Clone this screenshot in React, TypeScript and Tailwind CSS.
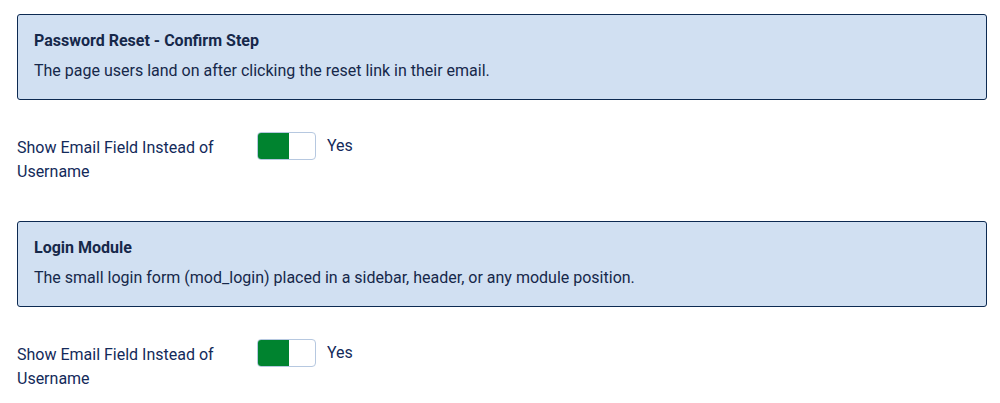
import React from 'react';

function InfoBox({ title, text }: { title: string; text: string }) {
  return (
    <div className="rounded-[3px] border border-[#0d2a52] bg-[#d1e0f2] pl-4 pr-4 pt-[14px] pb-[16px] text-[#16284a]">
      <h4 className="text-[16px] font-bold leading-6">{title}</h4>
      <p className="mt-[6px] text-[16px] leading-6">{text}</p>
    </div>
  );
}

function ToggleRow({ label }: { label: string }) {
  return (
    <div className="flex items-start">
      <div className="mt-[4px] w-[240px] text-[16px] leading-6 text-[#132a5a]">{label}</div>
      <div className="flex items-start">
        <div className="flex h-[28px] w-[59px] overflow-hidden rounded-[4px] border border-[#b6c8e0] bg-white">
          <span className="h-full w-[31px] bg-[#00832f]" />
        </div>
        <span className="ml-[11px] mt-[2px] text-[16px] leading-6 text-[#132a5a]">Yes</span>
      </div>
    </div>
  );
}

export default function App() {
  return (
    <div className="h-[403px] w-[1000px] bg-white pl-[17px] pr-[13px] pt-[14px] font-['Roboto',sans-serif]">
      <InfoBox
        title="Password Reset - Confirm Step"
        text="The page users land on after clicking the reset link in their email."
      />
      <div className="mt-[32px]">
        <ToggleRow label="Show Email Field Instead of Username" />
      </div>
      <div className="mt-[37px]">
        <InfoBox
          title="Login Module"
          text="The small login form (mod_login) placed in a sidebar, header, or any module position."
        />
      </div>
      <div className="mt-[32px]">
        <ToggleRow label="Show Email Field Instead of Username" />
      </div>
    </div>
  );
}
